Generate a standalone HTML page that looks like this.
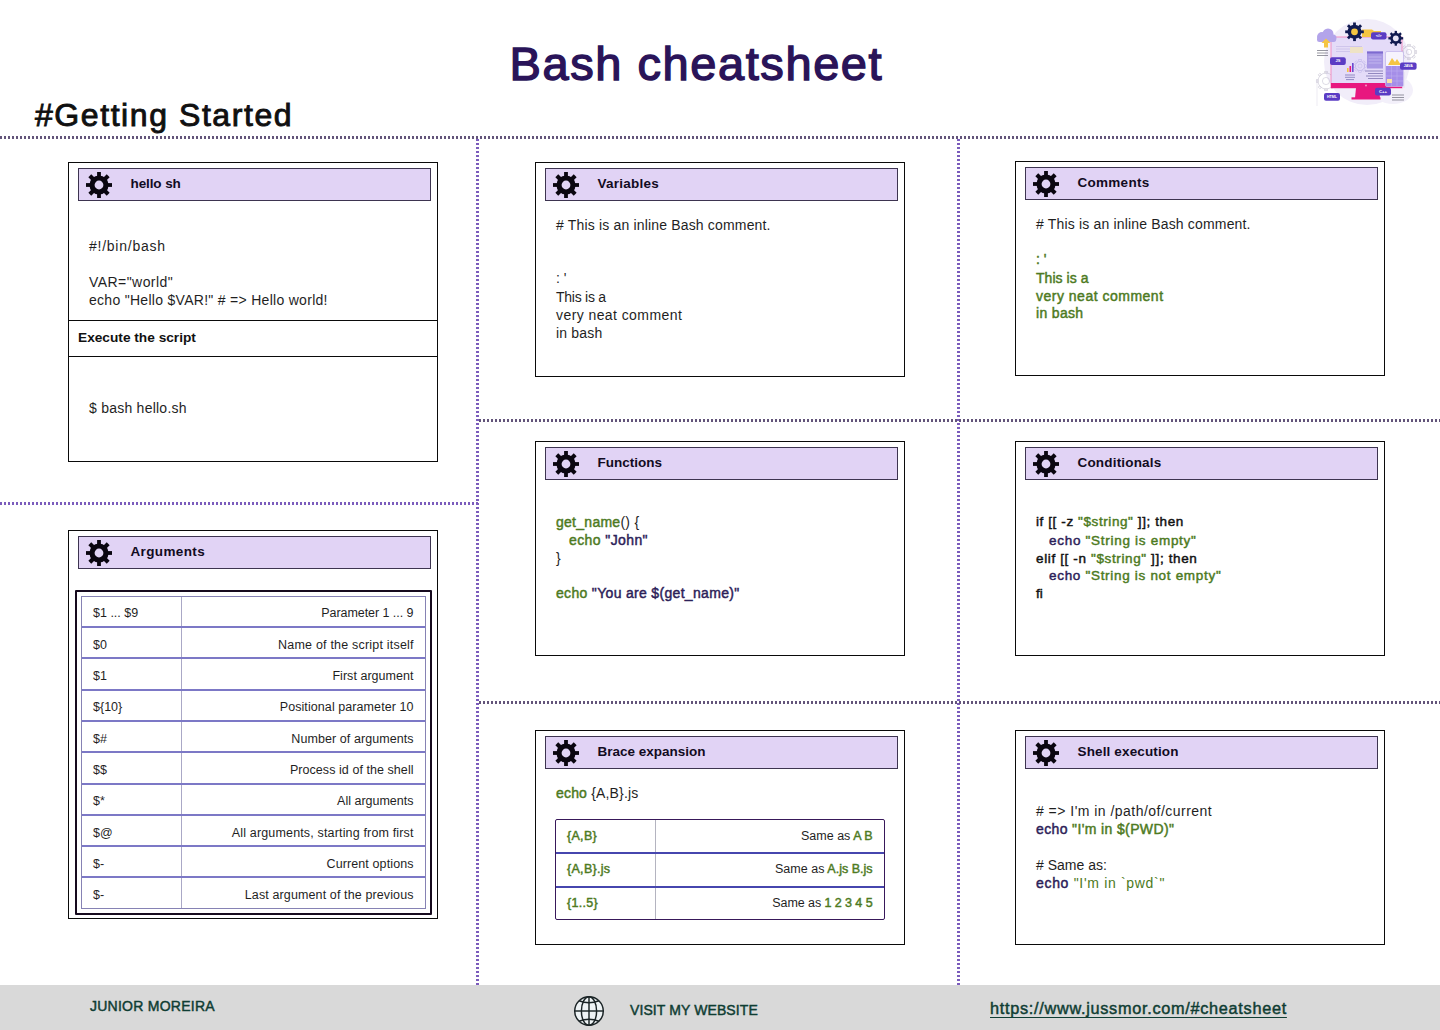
<!DOCTYPE html>
<html><head><meta charset="utf-8"><title>Bash cheatsheet</title>
<style>
html,body{margin:0;padding:0;background:#fff;}
body{width:1440px;height:1030px;position:relative;overflow:hidden;font-family:"Liberation Sans",sans-serif;}
.t{position:absolute;white-space:pre;line-height:1;}
.r{position:absolute;}
b{font-weight:normal;-webkit-text-stroke-width:0.45px;}
</style></head><body>
<div class="r" style="left:0px;top:136px;width:1440px;height:3px;background:repeating-linear-gradient(90deg,#63557a 0 2px,transparent 2px 4px);"></div>
<div class="r" style="left:476px;top:139px;width:3px;height:846px;background:repeating-linear-gradient(180deg,#7b5cbc 0 2px,transparent 2px 4px);"></div>
<div class="r" style="left:957px;top:139px;width:3px;height:846px;background:repeating-linear-gradient(180deg,#7b5cbc 0 2px,transparent 2px 4px);"></div>
<div class="r" style="left:0px;top:502px;width:479px;height:3px;background:repeating-linear-gradient(90deg,#7b5cbc 0 2px,transparent 2px 4px);"></div>
<div class="r" style="left:479px;top:419px;width:961px;height:3px;background:repeating-linear-gradient(90deg,#63557a 0 2px,transparent 2px 4px);"></div>
<div class="r" style="left:479px;top:701px;width:961px;height:3px;background:repeating-linear-gradient(90deg,#63557a 0 2px,transparent 2px 4px);"></div>
<div class="t" style="left:509.5px;top:40.21px;font-size:47px;color:#2a1459;letter-spacing:1.57px;-webkit-text-stroke:1.4px #2a1459;">Bash cheatsheet</div>
<div class="t" style="left:35px;top:98.91px;font-size:32px;color:#101010;letter-spacing:1.57px;-webkit-text-stroke:0.9px #101010;">#Getting Started</div>
<div class="r" style="left:68px;top:162px;width:370px;height:300px;border:1px solid #0a0a0a;background:#fff;box-sizing:border-box;"></div>
<div class="r" style="left:78px;top:168px;width:353px;height:33px;border:1px solid #3d3450;border-top-width:1.5px;border-bottom-width:1.5px;background:#e1d3f5;box-sizing:border-box;"></div>
<div class="r" style="left:86px;top:172px;width:26px;height:26px"><svg width="26" height="26" viewBox="-13 -13 26 26"><g fill="#0a0610"><rect x="-1.9" y="-13" width="3.8" height="26" transform="rotate(0)"/><rect x="-2.05" y="-13" width="4.1" height="26" transform="rotate(45)"/><rect x="-1.9" y="-13" width="3.8" height="26" transform="rotate(90)"/><rect x="-2.05" y="-13" width="4.1" height="26" transform="rotate(135)"/><circle r="9.6"/></g><circle r="4.4" fill="#e1d4f5"/></svg></div>
<div class="t" style="left:130.5px;top:176.57px;font-size:13.5px;font-weight:bold;color:#120b22;letter-spacing:-0.1px;">hello sh</div>
<div class="t" style="left:89px;top:238.95px;font-size:14px;color:#1f1f1f;letter-spacing:0.75px;">#!/bin/bash</div>
<div class="t" style="left:89px;top:275.05px;font-size:14px;color:#1f1f1f;letter-spacing:0.44px;">VAR="world"</div>
<div class="t" style="left:89px;top:293.05px;font-size:14px;color:#1f1f1f;letter-spacing:0.29px;">echo "Hello $VAR!" # =&gt; Hello world!</div>
<div class="r" style="left:68px;top:320px;width:370px;height:1px;background:#0a0a0a;"></div>
<div class="t" style="left:78px;top:331.40px;font-size:13.7px;font-weight:bold;color:#111;">Execute the script</div>
<div class="r" style="left:68px;top:356px;width:370px;height:1px;background:#0a0a0a;"></div>
<div class="t" style="left:89px;top:400.95px;font-size:14px;color:#1f1f1f;letter-spacing:0.24px;">$ bash hello.sh</div>
<div class="r" style="left:68px;top:530px;width:370px;height:389px;border:1px solid #0a0a0a;background:#fff;box-sizing:border-box;"></div>
<div class="r" style="left:78px;top:536px;width:353px;height:33px;border:1px solid #3d3450;border-top-width:1.5px;border-bottom-width:1.5px;background:#e1d3f5;box-sizing:border-box;"></div>
<div class="r" style="left:86px;top:540px;width:26px;height:26px"><svg width="26" height="26" viewBox="-13 -13 26 26"><g fill="#0a0610"><rect x="-1.9" y="-13" width="3.8" height="26" transform="rotate(0)"/><rect x="-2.05" y="-13" width="4.1" height="26" transform="rotate(45)"/><rect x="-1.9" y="-13" width="3.8" height="26" transform="rotate(90)"/><rect x="-2.05" y="-13" width="4.1" height="26" transform="rotate(135)"/><circle r="9.6"/></g><circle r="4.4" fill="#e1d4f5"/></svg></div>
<div class="t" style="left:130.5px;top:544.57px;font-size:13.5px;font-weight:bold;color:#120b22;letter-spacing:0.37px;">Arguments</div>
<div class="r" style="left:75px;top:590px;width:357px;height:325px;border:2px solid #160a1e;border-radius:1px;box-sizing:border-box;background:#fff;"></div>
<div class="r" style="left:81px;top:596px;width:345px;height:313px;border:1px solid #8682b4;box-sizing:border-box;"></div>
<div class="r" style="left:181px;top:597px;width:1px;height:311px;background:#aaa8c6;"></div>
<div class="t" style="left:93px;top:607.42px;font-size:12.5px;color:#1f1f1f;">$1 ... $9</div>
<div class="t" style="right:1026.55px;top:607.42px;font-size:12.5px;text-align:right;color:#1f1f1f;letter-spacing:-0.05px;">Parameter 1 ... 9</div>
<div class="r" style="left:82px;top:626.0px;width:343px;height:2px;background:#7c78c6"></div>
<div class="t" style="left:93px;top:638.72px;font-size:12.5px;color:#1f1f1f;">$0</div>
<div class="t" style="right:1026.3px;top:638.72px;font-size:12.5px;text-align:right;color:#1f1f1f;letter-spacing:0.2px;">Name of the script itself</div>
<div class="r" style="left:82px;top:657.3px;width:343px;height:2px;background:#7c78c6"></div>
<div class="t" style="left:93px;top:670.02px;font-size:12.5px;color:#1f1f1f;">$1</div>
<div class="t" style="right:1026.46px;top:670.02px;font-size:12.5px;text-align:right;color:#1f1f1f;letter-spacing:0.04px;">First argument</div>
<div class="r" style="left:82px;top:688.6px;width:343px;height:2px;background:#7c78c6"></div>
<div class="t" style="left:93px;top:701.32px;font-size:12.5px;color:#1f1f1f;">${10}</div>
<div class="t" style="right:1026.42px;top:701.32px;font-size:12.5px;text-align:right;color:#1f1f1f;letter-spacing:0.08px;">Positional parameter 10</div>
<div class="r" style="left:82px;top:719.9px;width:343px;height:2px;background:#7c78c6"></div>
<div class="t" style="left:93px;top:732.62px;font-size:12.5px;color:#1f1f1f;">$#</div>
<div class="t" style="right:1026.43px;top:732.62px;font-size:12.5px;text-align:right;color:#1f1f1f;letter-spacing:0.07px;">Number of arguments</div>
<div class="r" style="left:82px;top:751.2px;width:343px;height:2px;background:#7c78c6"></div>
<div class="t" style="left:93px;top:763.92px;font-size:12.5px;color:#1f1f1f;">$$</div>
<div class="t" style="right:1026.44px;top:763.92px;font-size:12.5px;text-align:right;color:#1f1f1f;letter-spacing:0.06px;">Process id of the shell</div>
<div class="r" style="left:82px;top:782.5px;width:343px;height:2px;background:#7c78c6"></div>
<div class="t" style="left:93px;top:795.22px;font-size:12.5px;color:#1f1f1f;">$*</div>
<div class="t" style="right:1026.5px;top:795.22px;font-size:12.5px;text-align:right;color:#1f1f1f;letter-spacing:0px;">All arguments</div>
<div class="r" style="left:82px;top:813.8px;width:343px;height:2px;background:#7c78c6"></div>
<div class="t" style="left:93px;top:826.52px;font-size:12.5px;color:#1f1f1f;">$@</div>
<div class="t" style="right:1026.34px;top:826.52px;font-size:12.5px;text-align:right;color:#1f1f1f;letter-spacing:0.16px;">All arguments, starting from first</div>
<div class="r" style="left:82px;top:845.1px;width:343px;height:2px;background:#7c78c6"></div>
<div class="t" style="left:93px;top:857.82px;font-size:12.5px;color:#1f1f1f;">$-</div>
<div class="t" style="right:1026.3899999999999px;top:857.82px;font-size:12.5px;text-align:right;color:#1f1f1f;letter-spacing:0.11px;">Current options</div>
<div class="r" style="left:82px;top:876.4px;width:343px;height:2px;background:#7c78c6"></div>
<div class="t" style="left:93px;top:889.12px;font-size:12.5px;color:#1f1f1f;">$-</div>
<div class="t" style="right:1026.38px;top:889.12px;font-size:12.5px;text-align:right;color:#1f1f1f;letter-spacing:0.12px;">Last argument of the previous</div>
<div class="r" style="left:535px;top:162px;width:370px;height:215px;border:1px solid #0a0a0a;background:#fff;box-sizing:border-box;"></div>
<div class="r" style="left:545px;top:168px;width:353px;height:33px;border:1px solid #3d3450;border-top-width:1.5px;border-bottom-width:1.5px;background:#e1d3f5;box-sizing:border-box;"></div>
<div class="r" style="left:553px;top:172px;width:26px;height:26px"><svg width="26" height="26" viewBox="-13 -13 26 26"><g fill="#0a0610"><rect x="-1.9" y="-13" width="3.8" height="26" transform="rotate(0)"/><rect x="-2.05" y="-13" width="4.1" height="26" transform="rotate(45)"/><rect x="-1.9" y="-13" width="3.8" height="26" transform="rotate(90)"/><rect x="-2.05" y="-13" width="4.1" height="26" transform="rotate(135)"/><circle r="9.6"/></g><circle r="4.4" fill="#e1d4f5"/></svg></div>
<div class="t" style="left:597.5px;top:176.57px;font-size:13.5px;font-weight:bold;color:#120b22;letter-spacing:0.25px;">Variables</div>
<div class="t" style="left:556px;top:218.15px;font-size:14px;color:#1f1f1f;letter-spacing:0.17px;"># This is an inline Bash comment.</div>
<div class="t" style="left:556px;top:271.45px;font-size:14px;color:#1f1f1f;">: '</div>
<div class="t" style="left:556px;top:289.85px;font-size:14px;color:#1f1f1f;letter-spacing:-0.25px;">This is a</div>
<div class="t" style="left:556px;top:308.15px;font-size:14px;color:#1f1f1f;letter-spacing:0.42px;">very neat comment</div>
<div class="t" style="left:556px;top:325.65px;font-size:14px;color:#1f1f1f;letter-spacing:0.19px;">in bash</div>
<div class="r" style="left:535px;top:441px;width:370px;height:215px;border:1px solid #0a0a0a;background:#fff;box-sizing:border-box;"></div>
<div class="r" style="left:545px;top:447px;width:353px;height:33px;border:1px solid #3d3450;border-top-width:1.5px;border-bottom-width:1.5px;background:#e1d3f5;box-sizing:border-box;"></div>
<div class="r" style="left:553px;top:451px;width:26px;height:26px"><svg width="26" height="26" viewBox="-13 -13 26 26"><g fill="#0a0610"><rect x="-1.9" y="-13" width="3.8" height="26" transform="rotate(0)"/><rect x="-2.05" y="-13" width="4.1" height="26" transform="rotate(45)"/><rect x="-1.9" y="-13" width="3.8" height="26" transform="rotate(90)"/><rect x="-2.05" y="-13" width="4.1" height="26" transform="rotate(135)"/><circle r="9.6"/></g><circle r="4.4" fill="#e1d4f5"/></svg></div>
<div class="t" style="left:597.5px;top:455.57px;font-size:13.5px;font-weight:bold;color:#120b22;letter-spacing:0px;">Functions</div>
<div class="t" style="left:556px;top:514.85px;font-size:14px;color:#1f1f1f;letter-spacing:0.27px;"><b style="color:#4d7a22">get_name</b>() {</div>
<div class="t" style="left:569px;top:532.85px;font-size:14px;color:#1f1f1f;letter-spacing:0.4px;"><b style="color:#4d7a22">echo</b> <b style="color:#2c2158">"John"</b></div>
<div class="t" style="left:556px;top:550.85px;font-size:14px;color:#1f1f1f;">}</div>
<div class="t" style="left:556px;top:586.45px;font-size:14px;color:#1f1f1f;letter-spacing:0.32px;"><b style="color:#4d7a22">echo</b> <b style="color:#2c2158">"You are $(get_name)"</b></div>
<div class="r" style="left:535px;top:730px;width:370px;height:215px;border:1px solid #0a0a0a;background:#fff;box-sizing:border-box;"></div>
<div class="r" style="left:545px;top:736px;width:353px;height:33px;border:1px solid #3d3450;border-top-width:1.5px;border-bottom-width:1.5px;background:#e1d3f5;box-sizing:border-box;"></div>
<div class="r" style="left:553px;top:740px;width:26px;height:26px"><svg width="26" height="26" viewBox="-13 -13 26 26"><g fill="#0a0610"><rect x="-1.9" y="-13" width="3.8" height="26" transform="rotate(0)"/><rect x="-2.05" y="-13" width="4.1" height="26" transform="rotate(45)"/><rect x="-1.9" y="-13" width="3.8" height="26" transform="rotate(90)"/><rect x="-2.05" y="-13" width="4.1" height="26" transform="rotate(135)"/><circle r="9.6"/></g><circle r="4.4" fill="#e1d4f5"/></svg></div>
<div class="t" style="left:597.5px;top:744.57px;font-size:13.5px;font-weight:bold;color:#120b22;letter-spacing:0px;">Brace expansion</div>
<div class="t" style="left:556px;top:785.75px;font-size:14px;color:#1f1f1f;letter-spacing:0.18px;"><b style="color:#4d7a22">echo</b> {A,B}.js</div>
<div class="r" style="left:555px;top:819px;width:330px;height:101px;border:1.5px solid #38185a;border-radius:2px;box-sizing:border-box;"></div>
<div class="r" style="left:655px;top:820px;width:1px;height:99px;background:#b4b4c0;"></div>
<div class="r" style="left:556px;top:852px;width:328px;height:2px;background:#4646ae;"></div>
<div class="r" style="left:556px;top:886px;width:328px;height:2px;background:#4646ae;"></div>
<div class="t" style="left:567px;top:829.92px;font-size:12.5px;-webkit-text-stroke-width:0.45px;color:#4d7a22;letter-spacing:0.3px;">{A,B}</div>
<div class="t" style="right:567.4px;top:829.92px;font-size:12.5px;text-align:right;color:#1f1f1f;letter-spacing:0px;">Same as <b style="color:#4d7a22">A B</b></div>
<div class="t" style="left:567px;top:863.42px;font-size:12.5px;-webkit-text-stroke-width:0.45px;color:#4d7a22;letter-spacing:0.3px;">{A,B}.js</div>
<div class="t" style="right:567.38px;top:863.42px;font-size:12.5px;text-align:right;color:#1f1f1f;letter-spacing:0.02px;">Same as <b style="color:#4d7a22">A.js B.js</b></div>
<div class="t" style="left:567px;top:896.92px;font-size:12.5px;-webkit-text-stroke-width:0.45px;color:#4d7a22;letter-spacing:0.3px;">{1..5}</div>
<div class="t" style="right:567.47px;top:896.92px;font-size:12.5px;text-align:right;color:#1f1f1f;letter-spacing:-0.07px;">Same as <b style="color:#4d7a22">1 2 3 4 5</b></div>
<div class="r" style="left:1015px;top:161px;width:370px;height:215px;border:1px solid #0a0a0a;background:#fff;box-sizing:border-box;"></div>
<div class="r" style="left:1025px;top:167px;width:353px;height:33px;border:1px solid #3d3450;border-top-width:1.5px;border-bottom-width:1.5px;background:#e1d3f5;box-sizing:border-box;"></div>
<div class="r" style="left:1033px;top:171px;width:26px;height:26px"><svg width="26" height="26" viewBox="-13 -13 26 26"><g fill="#0a0610"><rect x="-1.9" y="-13" width="3.8" height="26" transform="rotate(0)"/><rect x="-2.05" y="-13" width="4.1" height="26" transform="rotate(45)"/><rect x="-1.9" y="-13" width="3.8" height="26" transform="rotate(90)"/><rect x="-2.05" y="-13" width="4.1" height="26" transform="rotate(135)"/><circle r="9.6"/></g><circle r="4.4" fill="#e1d4f5"/></svg></div>
<div class="t" style="left:1077.5px;top:175.57px;font-size:13.5px;font-weight:bold;color:#120b22;letter-spacing:0.28px;">Comments</div>
<div class="t" style="left:1036px;top:216.85px;font-size:14px;color:#1f1f1f;letter-spacing:0.17px;"># This is an inline Bash comment.</div>
<div class="t" style="left:1036px;top:252.35px;font-size:14px;-webkit-text-stroke-width:0.45px;color:#4d7a22;">: '</div>
<div class="t" style="left:1036px;top:270.65px;font-size:14px;-webkit-text-stroke-width:0.45px;color:#4d7a22;letter-spacing:0.04px;">This is a</div>
<div class="t" style="left:1036px;top:288.95px;font-size:14px;-webkit-text-stroke-width:0.45px;color:#4d7a22;letter-spacing:0.5px;">very neat comment</div>
<div class="t" style="left:1036px;top:306.45px;font-size:14px;-webkit-text-stroke-width:0.45px;color:#4d7a22;letter-spacing:0.33px;">in bash</div>
<div class="r" style="left:1015px;top:441px;width:370px;height:215px;border:1px solid #0a0a0a;background:#fff;box-sizing:border-box;"></div>
<div class="r" style="left:1025px;top:447px;width:353px;height:33px;border:1px solid #3d3450;border-top-width:1.5px;border-bottom-width:1.5px;background:#e1d3f5;box-sizing:border-box;"></div>
<div class="r" style="left:1033px;top:451px;width:26px;height:26px"><svg width="26" height="26" viewBox="-13 -13 26 26"><g fill="#0a0610"><rect x="-1.9" y="-13" width="3.8" height="26" transform="rotate(0)"/><rect x="-2.05" y="-13" width="4.1" height="26" transform="rotate(45)"/><rect x="-1.9" y="-13" width="3.8" height="26" transform="rotate(90)"/><rect x="-2.05" y="-13" width="4.1" height="26" transform="rotate(135)"/><circle r="9.6"/></g><circle r="4.4" fill="#e1d4f5"/></svg></div>
<div class="t" style="left:1077.5px;top:455.57px;font-size:13.5px;font-weight:bold;color:#120b22;letter-spacing:0.18px;">Conditionals</div>
<div class="t" style="left:1036px;top:515.27px;font-size:13.5px;-webkit-text-stroke-width:0.45px;color:#111;letter-spacing:0.59px;">if [[ -z <span style="color:#4d7a22">"$string"</span> ]]; then</div>
<div class="t" style="left:1049px;top:533.57px;font-size:13.5px;-webkit-text-stroke-width:0.45px;color:#111;letter-spacing:0.71px;"><span style="color:#2c2158">echo</span> <span style="color:#4d7a22">"String is empty"</span></div>
<div class="t" style="left:1036px;top:551.57px;font-size:13.5px;-webkit-text-stroke-width:0.45px;color:#111;letter-spacing:0.63px;">elif [[ -n <span style="color:#4d7a22">"$string"</span> ]]; then</div>
<div class="t" style="left:1049px;top:569.37px;font-size:13.5px;-webkit-text-stroke-width:0.45px;color:#111;letter-spacing:0.69px;"><span style="color:#2c2158">echo</span> <span style="color:#4d7a22">"String is not empty"</span></div>
<div class="t" style="left:1036px;top:586.87px;font-size:13.5px;-webkit-text-stroke-width:0.45px;color:#111;">fi</div>
<div class="r" style="left:1015px;top:730px;width:370px;height:215px;border:1px solid #0a0a0a;background:#fff;box-sizing:border-box;"></div>
<div class="r" style="left:1025px;top:736px;width:353px;height:33px;border:1px solid #3d3450;border-top-width:1.5px;border-bottom-width:1.5px;background:#e1d3f5;box-sizing:border-box;"></div>
<div class="r" style="left:1033px;top:740px;width:26px;height:26px"><svg width="26" height="26" viewBox="-13 -13 26 26"><g fill="#0a0610"><rect x="-1.9" y="-13" width="3.8" height="26" transform="rotate(0)"/><rect x="-2.05" y="-13" width="4.1" height="26" transform="rotate(45)"/><rect x="-1.9" y="-13" width="3.8" height="26" transform="rotate(90)"/><rect x="-2.05" y="-13" width="4.1" height="26" transform="rotate(135)"/><circle r="9.6"/></g><circle r="4.4" fill="#e1d4f5"/></svg></div>
<div class="t" style="left:1077.5px;top:744.57px;font-size:13.5px;font-weight:bold;color:#120b22;letter-spacing:0.14px;">Shell execution</div>
<div class="t" style="left:1036px;top:803.95px;font-size:14px;color:#1f1f1f;letter-spacing:0.47px;"># =&gt; I'm in /path/of/current</div>
<div class="t" style="left:1036px;top:821.85px;font-size:14px;color:#1f1f1f;letter-spacing:0.37px;"><b style="color:#2c2158">echo</b> <b style="color:#4d7a22">"I'm in $(PWD)"</b></div>
<div class="t" style="left:1036px;top:857.85px;font-size:14px;color:#1f1f1f;"># Same as:</div>
<div class="t" style="left:1036px;top:875.65px;font-size:14px;color:#1f1f1f;letter-spacing:0.68px;"><b style="color:#2c2158">echo</b> <span style="color:#4d7a22">"I'm in `pwd`"</span></div>
<div class="r" style="left:0px;top:985px;width:1440px;height:45px;background:#d9d9d9;"></div>
<div class="t" style="left:90px;top:998.95px;font-size:14px;-webkit-text-stroke-width:0.45px;color:#0f3d33;letter-spacing:0.25px;">JUNIOR MOREIRA</div>
<svg class="r" style="left:573px;top:995px" width="32" height="32" viewBox="0 0 32 32"><g fill="none" stroke="#1b2426" stroke-width="1.45"><circle cx="16" cy="16" r="14.3" fill="#eef3f5"/><ellipse cx="16" cy="16" rx="7.6" ry="14.3"/><line x1="16" y1="1.7" x2="16" y2="30.3"/><line x1="1.7" y1="16" x2="30.3" y2="16"/><path d="M6 5.8Q16 9.6 26 5.8M6 26.2Q16 22.4 26 26.2"/></g></svg>
<div class="t" style="left:630px;top:1002.95px;font-size:14px;-webkit-text-stroke-width:0.45px;color:#0f3d33;letter-spacing:0.1px;">VISIT MY WEBSITE</div>
<div class="t" style="left:990px;top:1000.20px;font-size:16.3px;-webkit-text-stroke-width:0.45px;color:#0f3d33;letter-spacing:0.7px;text-decoration:underline;text-underline-offset:2.5px;text-decoration-thickness:1.2px;text-decoration-skip-ink:none;">https://www.jussmor.com/#cheatsheet</div>
<div class="r" style="left:1305px;top:10px;width:120px;height:100px"><svg width="120" height="100" viewBox="0 0 120 100"><circle cx="62" cy="52" r="43" fill="#f1edf9"/><ellipse cx="88" cy="80" rx="20" ry="14" fill="#f3f0fa"/><g transform="translate(104 42)" fill="none" stroke="#b8b4c6" stroke-width="0.45"><circle r="6"/><circle r="2.7"/><rect x="-1.2" y="-7.8" width="2.4" height="1.8" transform="rotate(0)"/><rect x="-1.2" y="-7.8" width="2.4" height="1.8" transform="rotate(45)"/><rect x="-1.2" y="-7.8" width="2.4" height="1.8" transform="rotate(90)"/><rect x="-1.2" y="-7.8" width="2.4" height="1.8" transform="rotate(135)"/><rect x="-1.2" y="-7.8" width="2.4" height="1.8" transform="rotate(180)"/><rect x="-1.2" y="-7.8" width="2.4" height="1.8" transform="rotate(225)"/><rect x="-1.2" y="-7.8" width="2.4" height="1.8" transform="rotate(270)"/><rect x="-1.2" y="-7.8" width="2.4" height="1.8" transform="rotate(315)"/></g><g transform="translate(21 71)" fill="none" stroke="#b8b4c6" stroke-width="0.45"><circle r="8"/><circle r="3.6"/><rect x="-1.2" y="-9.8" width="2.4" height="1.8" transform="rotate(0)"/><rect x="-1.2" y="-9.8" width="2.4" height="1.8" transform="rotate(45)"/><rect x="-1.2" y="-9.8" width="2.4" height="1.8" transform="rotate(90)"/><rect x="-1.2" y="-9.8" width="2.4" height="1.8" transform="rotate(135)"/><rect x="-1.2" y="-9.8" width="2.4" height="1.8" transform="rotate(180)"/><rect x="-1.2" y="-9.8" width="2.4" height="1.8" transform="rotate(225)"/><rect x="-1.2" y="-9.8" width="2.4" height="1.8" transform="rotate(270)"/><rect x="-1.2" y="-9.8" width="2.4" height="1.8" transform="rotate(315)"/></g><path d="M12 70 V96 M99 62 V78" stroke="#d0cce0" stroke-width="0.4"/><rect x="26" y="27" width="71" height="51" fill="#e4dbf8" stroke="#f27ab5" stroke-width="0.8"/><rect x="26" y="73" width="71" height="5" fill="#e8177f"/><polygon points="51,78 74,78 75,88 50,88" fill="#e8177f"/><rect x="46.5" y="87.3" width="29" height="2.2" fill="#e8177f"/><circle cx="61" cy="75.5" r="0.9" fill="#f5a3c9"/><rect x="30" y="34" width="29" height="12" fill="#e5dcf7"/><rect x="45" y="37" width="13" height="6" fill="#efe3c6"/><path d="M31 36.5H57 M31 39H45 M31 41.5H45" stroke="#c9bfe8" stroke-width="0.8"/><rect x="62" y="41.5" width="16" height="17" fill="#a898e4"/><rect x="62" y="41.5" width="16" height="2" fill="#7d6ad0"/><path d="M63.5 47H76.5 M63.5 50H76.5 M63.5 53H76.5" stroke="#c8bdf0" stroke-width="0.8"/><path d="M60 61H78 M63 63.5H78 M61 66H78 M63 68.5H78" stroke="#6f64a6" stroke-width="0.7"/><g transform="translate(55 56)" fill="none" stroke="#b9b0e6" stroke-width="0.45"><circle r="4.5"/><circle r="2.025"/><rect x="-1.2" y="-6.3" width="2.4" height="1.8" transform="rotate(0)"/><rect x="-1.2" y="-6.3" width="2.4" height="1.8" transform="rotate(45)"/><rect x="-1.2" y="-6.3" width="2.4" height="1.8" transform="rotate(90)"/><rect x="-1.2" y="-6.3" width="2.4" height="1.8" transform="rotate(135)"/><rect x="-1.2" y="-6.3" width="2.4" height="1.8" transform="rotate(180)"/><rect x="-1.2" y="-6.3" width="2.4" height="1.8" transform="rotate(225)"/><rect x="-1.2" y="-6.3" width="2.4" height="1.8" transform="rotate(270)"/><rect x="-1.2" y="-6.3" width="2.4" height="1.8" transform="rotate(315)"/></g><rect x="42" y="58" width="1.6" height="4" fill="#f5c542"/><rect x="44.5" y="56" width="1.6" height="6" fill="#e8177f"/><rect x="47" y="53" width="1.6" height="9" fill="#6a4ad0"/><path d="M40 65H50 M40 67.3H50 M41 69.6H49" stroke="#5a54a0" stroke-width="0.6"/><rect x="80.5" y="41.5" width="18" height="35" rx="1.5" fill="#f6f3fd" stroke="#b7aae8" stroke-width="0.6"/><polygon points="83,55 87,48 90,52 92,49 96,55" fill="#f5c542"/><rect x="81" y="56" width="17" height="20" fill="#a58ee8"/><path d="M81 61H98 M81 66H98 M81 71H98 M86.5 56V76 M92 56V76" stroke="#c1b1f2" stroke-width="0.5"/><rect x="82" y="69" width="5" height="4" fill="#f8e2a8"/><g fill="#b3a4ea"><circle cx="17" cy="27" r="5"/><circle cx="23" cy="24" r="5.5"/><circle cx="28" cy="28" r="3.5"/><rect x="12" y="27" width="19" height="5" rx="2.5"/></g><rect x="19" y="32" width="4" height="5.5" fill="#f5c542"/><polygon points="16.5,33 25.5,33 21,28.5" fill="#f5c542"/><path d="M12 40.5H23 M12 43H23 M12 45.5H23" stroke="#6a6a78" stroke-width="0.7"/><path d="M87 85H99 M87 87.5H99 M87 90H99" stroke="#6a6a78" stroke-width="0.7"/><path d="M57 19.5H67L69 21H76V27H57Z" fill="#f5c542"/><g transform="translate(49.5 21.8)"><rect x="-1.4" y="-9.3" width="2.8" height="9.3" fill="#101a50" transform="rotate(0.0)"/><rect x="-1.4" y="-9.3" width="2.8" height="9.3" fill="#101a50" transform="rotate(45.0)"/><rect x="-1.4" y="-9.3" width="2.8" height="9.3" fill="#101a50" transform="rotate(90.0)"/><rect x="-1.4" y="-9.3" width="2.8" height="9.3" fill="#101a50" transform="rotate(135.0)"/><rect x="-1.4" y="-9.3" width="2.8" height="9.3" fill="#101a50" transform="rotate(180.0)"/><rect x="-1.4" y="-9.3" width="2.8" height="9.3" fill="#101a50" transform="rotate(225.0)"/><rect x="-1.4" y="-9.3" width="2.8" height="9.3" fill="#101a50" transform="rotate(270.0)"/><rect x="-1.4" y="-9.3" width="2.8" height="9.3" fill="#101a50" transform="rotate(315.0)"/><circle r="7.0" fill="#101a50"/><circle r="3.4" fill="#f5c542"/></g><g transform="translate(90.8 28.3)"><rect x="-1.15" y="-7.4" width="2.3" height="7.4" fill="#101a50" transform="rotate(0.0)"/><rect x="-1.15" y="-7.4" width="2.3" height="7.4" fill="#101a50" transform="rotate(45.0)"/><rect x="-1.15" y="-7.4" width="2.3" height="7.4" fill="#101a50" transform="rotate(90.0)"/><rect x="-1.15" y="-7.4" width="2.3" height="7.4" fill="#101a50" transform="rotate(135.0)"/><rect x="-1.15" y="-7.4" width="2.3" height="7.4" fill="#101a50" transform="rotate(180.0)"/><rect x="-1.15" y="-7.4" width="2.3" height="7.4" fill="#101a50" transform="rotate(225.0)"/><rect x="-1.15" y="-7.4" width="2.3" height="7.4" fill="#101a50" transform="rotate(270.0)"/><rect x="-1.15" y="-7.4" width="2.3" height="7.4" fill="#101a50" transform="rotate(315.0)"/><circle r="5.6" fill="#101a50"/><circle r="2.9" fill="#e8e4f6"/></g><rect x="66" y="22.3" width="15.5" height="7.3" rx="2" fill="#5b3cc4"/><text x="73.75" y="27.25" font-family="Liberation Sans" font-weight="bold" font-size="4.2" fill="#fff" text-anchor="middle">&lt;/&gt;</text><rect x="25" y="47.3" width="15.8" height="7.6" rx="2" fill="#5b3cc4"/><text x="32.9" y="52.39999999999999" font-family="Liberation Sans" font-weight="bold" font-size="4" fill="#fff" text-anchor="middle">JS</text><rect x="95" y="52.4" width="16.6" height="7.3" rx="2" fill="#5b3cc4"/><text x="103.3" y="57.349999999999994" font-family="Liberation Sans" font-weight="bold" font-size="3.6" fill="#fff" text-anchor="middle">JAVA</text><rect x="70" y="77.7" width="16" height="7.7" rx="2" fill="#5b3cc4"/><text x="78.0" y="82.85" font-family="Liberation Sans" font-weight="bold" font-size="4.2" fill="#fff" text-anchor="middle">C++</text><rect x="19" y="83" width="16" height="7.8" rx="2" fill="#5b3cc4"/><text x="27.0" y="88.2" font-family="Liberation Sans" font-weight="bold" font-size="3.6" fill="#fff" text-anchor="middle">HTML</text></svg></div>
</body></html>
